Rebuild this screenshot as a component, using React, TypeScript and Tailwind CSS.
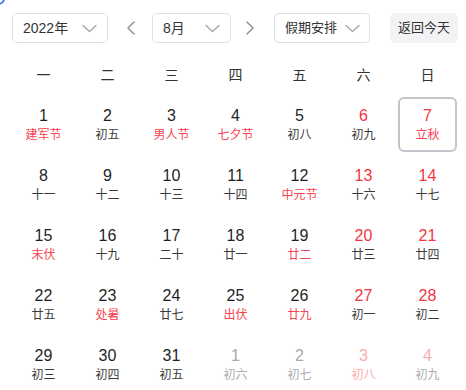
type Day = {
  n: number;
  lunar: string;
  redNum?: boolean;
  redLunar?: boolean;
  faded?: boolean;
  selected?: boolean;
};

const days: Day[] = [
  { n: 1, lunar: '建军节', redLunar: true },
  { n: 2, lunar: '初五' },
  { n: 3, lunar: '男人节', redLunar: true },
  { n: 4, lunar: '七夕节', redLunar: true },
  { n: 5, lunar: '初八' },
  { n: 6, lunar: '初九', redNum: true },
  { n: 7, lunar: '立秋', redNum: true, redLunar: true, selected: true },
  { n: 8, lunar: '十一' },
  { n: 9, lunar: '十二' },
  { n: 10, lunar: '十三' },
  { n: 11, lunar: '十四' },
  { n: 12, lunar: '中元节', redLunar: true },
  { n: 13, lunar: '十六', redNum: true },
  { n: 14, lunar: '十七', redNum: true },
  { n: 15, lunar: '末伏', redLunar: true },
  { n: 16, lunar: '十九' },
  { n: 17, lunar: '二十' },
  { n: 18, lunar: '廿一' },
  { n: 19, lunar: '廿二', redLunar: true },
  { n: 20, lunar: '廿三', redNum: true },
  { n: 21, lunar: '廿四', redNum: true },
  { n: 22, lunar: '廿五' },
  { n: 23, lunar: '处暑', redLunar: true },
  { n: 24, lunar: '廿七' },
  { n: 25, lunar: '出伏', redLunar: true },
  { n: 26, lunar: '廿九', redLunar: true },
  { n: 27, lunar: '初一', redNum: true },
  { n: 28, lunar: '初二', redNum: true },
  { n: 29, lunar: '初三' },
  { n: 30, lunar: '初四' },
  { n: 31, lunar: '初五' },
  { n: 1, lunar: '初六', faded: true },
  { n: 2, lunar: '初七', faded: true },
  { n: 3, lunar: '初八', faded: true, redNum: true, redLunar: true },
  { n: 4, lunar: '初九', faded: true, redNum: true },
];

const weekdays = ['一', '二', '三', '四', '五', '六', '日'];

function numColor(d: Day) {
  if (d.faded) return d.redNum ? 'text-[#fcabab]' : 'text-[#a8a8a8]';
  return d.redNum ? 'text-[#f5363f]' : 'text-[#1f1f1f]';
}

function lunarColor(d: Day) {
  if (d.faded) return d.redLunar ? 'text-[#fcabab]' : 'text-[#ababab]';
  return d.redLunar ? 'text-[#f7434f]' : 'text-[#3a3a3a]';
}

function Caret() {
  return (
    <svg width="15" height="9" viewBox="0 0 15 9" fill="none" className="text-[#a3a7b0]">
      <path d="M1 1.5 7.5 7.5 14 1.5" stroke="currentColor" strokeWidth="1.4" strokeLinecap="round" strokeLinejoin="round" />
    </svg>
  );
}

function Arrow({ dir }: { dir: 'left' | 'right' }) {
  return (
    <svg width="8" height="14" viewBox="0 0 8 14" fill="none" className="text-[#8d929c]">
      <path
        d={dir === 'left' ? 'M7 1 1 7 7 13' : 'M1 1 7 7 1 13'}
        stroke="currentColor"
        strokeWidth="1.5"
        strokeLinecap="round"
        strokeLinejoin="round"
      />
    </svg>
  );
}

export default function App() {
  return (
    <div className="relative w-[466px] h-[390px] overflow-hidden bg-white font-['Liberation_Sans','Noto_Sans_CJK_SC',sans-serif]">
      {/* stray focus ring corner */}
      <div className="absolute -left-[8px] -top-[8px] w-[13px] h-[13px] rounded-full border-2 border-[#4a7cf0]" />

      {/* Toolbar */}
      <div className="flex items-center mt-[13px] pl-[12px] h-[30px]">
        <div className="flex items-center justify-between w-[96px] h-[30px] pl-[10px] pr-[10px] border border-[#dcdfe6] rounded-[5px] text-[14px] text-[#333]">
          <span>2022年</span>
          <Caret />
        </div>
        <div className="ml-[19px]">
          <Arrow dir="left" />
        </div>
        <div className="ml-[17px] flex items-center justify-between w-[79px] h-[30px] pl-[10px] pr-[10px] border border-[#dcdfe6] rounded-[5px] text-[14px] text-[#333]">
          <span>8月</span>
          <Caret />
        </div>
        <div className="ml-[15px]">
          <Arrow dir="right" />
        </div>
        <div className="ml-[20px] flex items-center justify-between w-[96px] h-[30px] pl-[10px] pr-[9px] border border-[#dcdfe6] rounded-[5px] text-[13px] text-[#333]">
          <span>假期安排</span>
          <Caret />
        </div>
        <button className="ml-[20px] w-[68px] h-[30px] rounded-[5px] bg-[#f3f3f5] text-[13px] text-[#333] flex items-center justify-center">
          返回今天
        </button>
      </div>

      {/* Weekday header */}
      <div className="mt-[19px] ml-[14px] grid grid-cols-[repeat(7,59px)] gap-x-[5px] h-[26px]">
        {weekdays.map((w) => (
          <div key={w} className="flex items-center justify-center text-[14px] text-[#333]">
            {w}
          </div>
        ))}
      </div>

      {/* Days */}
      <div className="mt-[9px] ml-[14px] grid grid-cols-[repeat(7,59px)] gap-[5px]">
        {days.map((d, i) => (
          <div
            key={i}
            className={`h-[55px] flex flex-col items-center justify-center rounded-[6px] ${
              d.selected ? 'border-2 border-[#c3c5cd]' : 'border-2 border-transparent'
            }`}
          >
            <span className={`text-[16px] leading-[20px] ${numColor(d)}`}>{d.n}</span>
            <span className={`text-[12px] leading-[18px] ${lunarColor(d)}`}>{d.lunar}</span>
          </div>
        ))}
      </div>
    </div>
  );
}
